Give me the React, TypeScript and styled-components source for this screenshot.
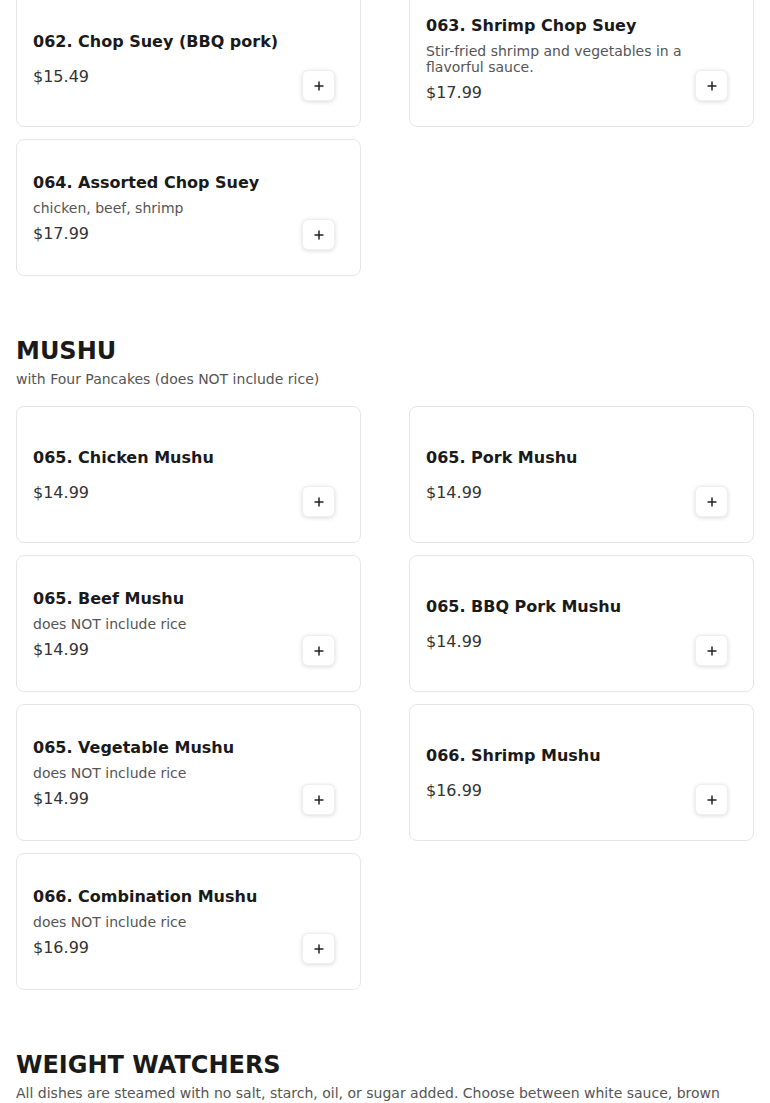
import React from "react";
import styled, { createGlobalStyle } from "styled-components";

const GlobalStyle = createGlobalStyle`
  body {
    margin: 0;
    background: #fff;
    font-family: "DejaVu Sans", "Liberation Sans", sans-serif;
    color: #1a1a1a;
  }
`;

const Page = styled.main`
  padding: 0 16px;
  margin-top: -10px;
`;

const Section = styled.section<{ first?: boolean }>`
  margin-top: ${({ first }) => (first ? "0" : "61px")};
`;

const SectionTitle = styled.h2`
  font-size: 24px;
  font-weight: bold;
  line-height: normal;
  margin: 0 0 6px;
  color: #1a1a1a;
`;

const SectionNote = styled.p`
  font-size: 14px;
  line-height: normal;
  color: #555;
  margin: 0 0 19px;
`;

const Grid = styled.div`
  display: grid;
  grid-template-columns: 1fr 1fr;
  column-gap: 48px;
  row-gap: 12px;
`;

const Card = styled.div`
  box-sizing: border-box;
  height: 137px;
  display: flex;
  align-items: center;
  justify-content: space-between;
  padding: 16px;
  border: 1px solid #e6e6e6;
  border-radius: 8px;
  background: #fff;
`;

const Info = styled.div`
  display: flex;
  flex-direction: column;
  min-width: 0;
  padding-right: 12px;
`;

const ItemName = styled.h3`
  font-size: 16px;
  font-weight: bold;
  line-height: normal;
  margin: 0 0 8px;
  color: #1a1a1a;
`;

const ItemDesc = styled.p`
  font-size: 14px;
  line-height: normal;
  color: #555;
  margin: 0;
`;

const Price = styled.span`
  font-size: 16px;
  line-height: normal;
  color: #333;
  margin-top: 8px;
`;

const AddButton = styled.button`
  flex: none;
  align-self: flex-end;
  box-sizing: border-box;
  width: 33px;
  height: 31px;
  margin: 0 9px 9px 0;
  display: flex;
  align-items: center;
  justify-content: center;
  padding: 0;
  background: #fff;
  border: 1px solid #efefef;
  border-radius: 6px;
  box-shadow: 0 1px 4px rgba(0, 0, 0, 0.14);
  color: #222;
  cursor: pointer;
`;

type Item = { name: string; price: string; desc?: string };

const chopSuey: Item[] = [
  { name: "062. Chop Suey (BBQ pork)", price: "$15.49" },
  {
    name: "063. Shrimp Chop Suey",
    price: "$17.99",
    desc: "Stir-fried shrimp and vegetables in a flavorful sauce.",
  },
  { name: "064. Assorted Chop Suey", price: "$17.99", desc: "chicken, beef, shrimp" },
];

const mushu: Item[] = [
  { name: "065. Chicken Mushu", price: "$14.99" },
  { name: "065. Pork Mushu", price: "$14.99" },
  { name: "065. Beef Mushu", price: "$14.99", desc: "does NOT include rice" },
  { name: "065. BBQ Pork Mushu", price: "$14.99" },
  { name: "065. Vegetable Mushu", price: "$14.99", desc: "does NOT include rice" },
  { name: "066. Shrimp Mushu", price: "$16.99" },
  { name: "066. Combination Mushu", price: "$16.99", desc: "does NOT include rice" },
];

const PlusIcon = () => (
  <svg width="10" height="10" viewBox="0 0 10 10" fill="none" stroke="currentColor" strokeWidth="1.5">
    <path d="M5 0.5v9M0.5 5h9" />
  </svg>
);

const MenuCard = ({ item }: { item: Item }) => (
  <Card>
    <Info>
      <ItemName>{item.name}</ItemName>
      {item.desc && <ItemDesc>{item.desc}</ItemDesc>}
      <Price>{item.price}</Price>
    </Info>
    <AddButton aria-label={`Add ${item.name}`}>
      <PlusIcon />
    </AddButton>
  </Card>
);

export default function App() {
  return (
    <>
      <GlobalStyle />
      <Page>
        <Section first>
          <Grid>
            {chopSuey.map((it) => (
              <MenuCard key={it.name} item={it} />
            ))}
          </Grid>
        </Section>

        <Section>
          <SectionTitle>MUSHU</SectionTitle>
          <SectionNote>with Four Pancakes (does NOT include rice)</SectionNote>
          <Grid>
            {mushu.map((it) => (
              <MenuCard key={it.name} item={it} />
            ))}
          </Grid>
        </Section>

        <Section>
          <SectionTitle>WEIGHT WATCHERS</SectionTitle>
          <SectionNote>
            All dishes are steamed with no salt, starch, oil, or sugar added. Choose between white sauce, brown
            sauce, or garlic sauce on the side.
          </SectionNote>
        </Section>
      </Page>
    </>
  );
}
